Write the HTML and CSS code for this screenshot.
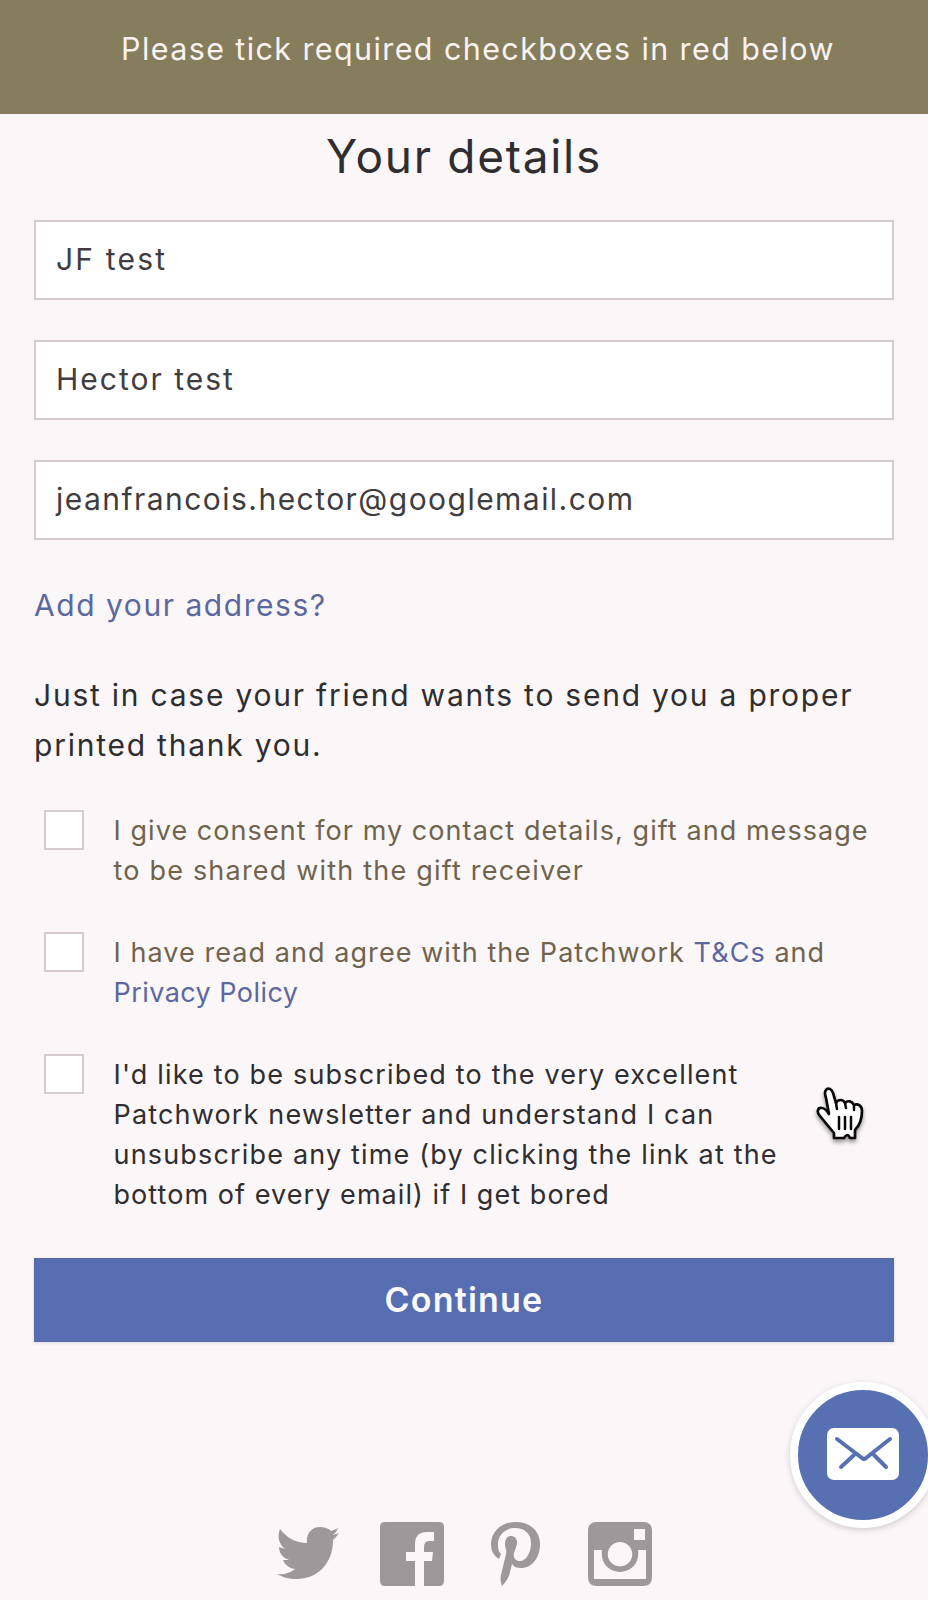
FILE: index.html
```html
<!DOCTYPE html>
<html lang="en">
<head>
<meta charset="utf-8">
<title>Your details</title>
<link rel="stylesheet" href="styles.css">
</head>
<body>
<div class="banner"><span>Please tick required checkboxes in red below</span></div>
<main class="details">
  <h1 class="title">Your details</h1>
  <div class="fields">
    <div class="field wide">JF test</div>
    <div class="field">Hector test</div>
    <div class="field email">jeanfrancois.hector@googlemail.com</div>
  </div>
  <a class="address">Add your address?</a>
  <p class="note">Just in case your friend wants to send you a proper<br>printed thank you.</p>
  <div class="consents">
    <div class="consent required">
      <span class="box"></span>
      <p class="label"><span class="snug">I give consent for my contact details, gift and message</span><br><span class="loose">to be shared with the gift receiver</span></p>
    </div>
    <div class="consent required">
      <span class="box"></span>
      <p class="label"><span class="snug">I have read and agree with the Patchwork <a>T&amp;Cs</a> and</span><br><a class="policy">Privacy Policy</a></p>
    </div>
    <div class="consent">
      <span class="box"></span>
      <p class="label">I'd like to be subscribed to the very excellent<br>Patchwork newsletter and understand I can<br>unsubscribe any time (by clicking the link at the<br><span class="snug">bottom of every email) if I get bored</span></p>
    </div>
  </div>
  <div class="continue">Continue</div>
</main>
<footer class="social">
  <svg class="twitter" viewBox="0 0 62 64"><path d="M3 7C10 16 19 21 30 21C29 11 35 5 43 5C47 5 51 6 54 9C57 8 59 7 61 6C60 9 58 11 56 13L62 11C60 14 58 16 56 18C56 43 39 57 20 57C12 57 5 55 0 52C7 53 13 51 18 47C12 46 8 43 6 38L12 38C6 36 2 31 2 25L8 27C2 22 0 15 3 7Z"/></svg>
  <svg class="facebook" viewBox="0 0 64 64"><path fill-rule="evenodd" d="M5 0H59Q64 0 64 5V59Q64 64 59 64H44V39H52L53 30H44V25Q44 19 49 19H54V10H47Q35 10 35 22V30H26V39H35V64H5Q0 64 0 59V5Q0 0 5 0Z"/></svg>
  <svg class="pinterest" viewBox="0 0 50 64"><path d="M26 0C11 0 1 10 1 22C1 29 4 34 9 37L11 32C8 29 8 26 8 22C8 13 15 6 25 6C35 6 41 12 41 21C41 31 36 39 30 39C25 39 23 35 24 31C26 25 27 23 27 20C27 16 24 14 21 14C17 14 15 18 15 22C15 26 17 28 16 32L11 53C10 58 11 61 12 64C16 60 19 55 20 50L22 42C24 45 27 46 31 46C42 46 50 36 50 22C50 9 40 0 26 0Z"/></svg>
  <svg class="instagram" viewBox="0 0 64 64"><path fill-rule="evenodd" d="M9 0H55Q64 0 64 9V55Q64 64 55 64H9Q0 64 0 55V9Q0 0 9 0ZM46 7V18H57V7ZM6 28V57H58V28H50C52 41 43 50 32 50C21 50 12 41 14 28ZM32 20A12.2 12.2 0 1 0 32 44.4A12.2 12.2 0 1 0 32 20Z"/></svg>
</footer>
<div class="mail">
  <svg viewBox="0 0 130 130"><rect x="29" y="38" width="72" height="52" rx="7" fill="#fff"/><path d="M39 49L64 68Q66 70 68 68L92 49M56 65L43 77M76 65L88 77" fill="none" stroke="#5670b1" stroke-width="4" stroke-linecap="round" stroke-linejoin="round"/></svg>
</div>
<svg class="pointer" viewBox="0 0 48 54"><path d="M10 3C12 0 16 2 17 6L20 16C22 12 27 12 29 16C32 13 36 14 38 18C42 16 46 19 46 24C46 32 44 38 39 43V51H34Q31.500 45 28 51H18V46C13 40 8 34 4 29C0 25 2 20 6 21C9 21 11 24 13 27L10 11C9 7 8 5 10 3Z" fill="#fff" stroke="#080808" stroke-width="2.7" stroke-linejoin="round"/><path d="M20 16L21 22M29 16L30 21M38 18L38 23M23 30V42M29 30V42M35 30V42" fill="none" stroke="#080808" stroke-width="2.5" stroke-linecap="round"/></svg>
</body>
</html>
```
FILE: styles.css
```css
* { box-sizing: border-box; }
body {
  position: relative;
  width: 928px;
  height: 1600px;
  margin: 0;
  overflow: hidden;
  background: #fbf7f8;
  color: #302d30;
  font-family: Inter, "Noto Sans", sans-serif;
  font-size: 30px;
  line-height: 50px;
  white-space: nowrap;
}
.banner {
  height: 114px;
  padding: 24px 0 0 121px;
  background: #857d5b;
  color: #faf3f2;
  font-size: 30.5px;
  letter-spacing: 1.4px;
}
.details { padding: 12px 34px 0; }
.title {
  margin: 0 0 34px;
  font-size: 46px;
  font-weight: 400;
  line-height: 60px;
  letter-spacing: 1.7px;
  text-align: center;
}
.fields { display: flex; flex-direction: column; gap: 40px; }
.field {
  height: 80px;
  padding-left: 20px;
  border: 2px solid #d3cbcf;
  background: #fff;
  color: #403c3f;
  line-height: 75px;
  letter-spacing: 2px;
}
.wide { letter-spacing: 2.2px; }
.email { letter-spacing: 1.46px; }
a { color: #5c67a0; }
.address { display: block; margin-top: 40px; letter-spacing: 1.54px; }
.note { margin: 40px 0; letter-spacing: 1.77px; }
.consents { display: flex; flex-direction: column; gap: 40px; }
.consent { display: flex; gap: 29.5px; padding-left: 10px; }
.box {
  flex: none;
  width: 40px;
  height: 40px;
  border: 2px solid #d6ccd0;
  background: #fff;
}
.label {
  margin: 0;
  padding: 1px 0;
  font-size: 27px;
  line-height: 40px;
  letter-spacing: 1.17px;
}
.required .label { color: #70634e; }
.snug { letter-spacing: 1.06px; }
.loose { letter-spacing: 1.2px; }
.policy { letter-spacing: .44px; }
.continue {
  height: 84px;
  margin-top: 42px;
  background: #566eb1;
  box-shadow: inset 0 0 0 1px #5869a5, 0 1px 3px #d9dae6;
  color: #fafaff;
  font-size: 34px;
  font-weight: 600;
  line-height: 84px;
  letter-spacing: 1.2px;
  text-align: center;
}
.social { display: flex; margin-top: 180px; padding-left: 277px; }
.social svg { height: 64px; fill: #9d999a; }
.twitter { width: 62px; margin-right: 41px; }
.facebook { width: 64px; margin-right: 46px; }
.pinterest { width: 50px; margin-right: 48px; }
.instagram { width: 64px; }
.mail {
  position: absolute;
  top: 1382px;
  left: 790px;
  width: 146px;
  height: 146px;
  border: 8px solid #fff;
  border-radius: 50%;
  background: #5670b1;
  box-shadow: 0 2px 6px rgba(60, 45, 55, .22);
}
.mail svg { display: block; width: 130px; height: 130px; }
.pointer {
  position: absolute;
  top: 1087px;
  left: 815px;
  width: 50px;
  height: 54px;
  overflow: visible;
  filter: drop-shadow(0 3px 2px rgba(0, 0, 0, .4));
}
```
